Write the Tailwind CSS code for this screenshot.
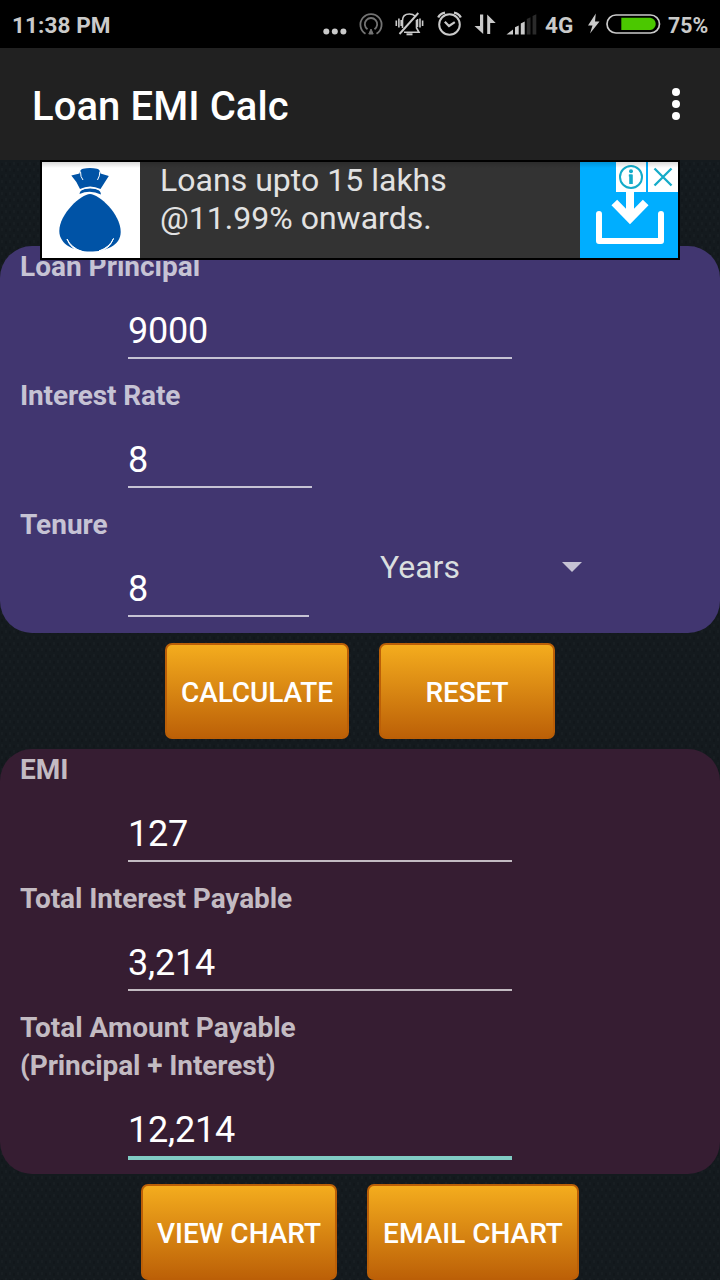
<!DOCTYPE html>
<html lang="en">
<head>
<meta charset="utf-8">
<title>Loan EMI Calc</title>
<script src="https://cdn.jsdelivr.net/npm/@tailwindcss/browser@4"></script>
</head>
<body class="font-['Roboto',sans-serif] bg-[#141a1e]">
<div class="relative isolate flex flex-col w-[720px] h-[1280px] overflow-hidden">
  <!-- woven backdrop -->
  <svg class="absolute inset-0 -z-10" width="720" height="1280">
    <defs>
      <pattern id="weave" width="8" height="12" patternUnits="userSpaceOnUse">
        <rect width="8" height="12" fill="#141a1e"/>
        <path d="M1 0h2v3h-2zM5 6h2v3h-2z" fill="#181e22"/>
        <path d="M5 1h2v3h-2zM1 7h2v3h-2z" fill="#12171b"/>
      </pattern>
    </defs>
    <rect width="720" height="1280" fill="url(#weave)"/>
  </svg>

  <header class="h-12 shrink-0 bg-black flex items-center text-[#cacaca] font-bold text-[22.5px]">
    <span class="ml-3 mt-0.5 w-[300px] leading-none tracking-[0.1px]">11:38 PM</span>
    <svg width="233" height="48" viewBox="312 0 233 48" fill="none" stroke="#cacaca">
      <g fill="#cacaca" stroke="none"><circle cx="326.3" cy="31.5" r="3"/><circle cx="334.8" cy="31.5" r="3"/><circle cx="343.4" cy="31.5" r="3"/></g>
      <g stroke="#747474" stroke-width="1.8">
        <path d="M365.500 33.700A10.600 10.600 0 1 1 376.500 33.700"/>
        <path d="M367.500 29.300A6.200 6.200 0 1 1 374.500 29.300"/>
        <path d="M371 29l2.200 5h-4.400z" fill="#747474" stroke-width="1"/>
      </g>
      <g stroke-width="1.6">
        <path d="M402.500 28V20.500C402.500 16 405 14 409.500 14Q413 14 415 16M416.500 20V28L419 32.300H404"/>
        <path d="M399.500 34L418.300 13" stroke-width="1.9"/>
        <path d="M406.500 34.300h6" stroke-width="2"/>
        <path d="M396.300 20.500v5.500M398.900 18.500v9M401.200 20v6M417.500 19v8M420 18.500v9M422.600 20.500v5.500"/>
      </g>
      <circle cx="449.500" cy="24.500" r="10.300" stroke-width="2"/>
      <path d="M444.800 21.800l4.200 4.200 5.800-3.800" stroke-width="2.200"/>
      <path d="M438.200 17.500Q440 13.600 445 12.600M460.800 17.500Q459 13.600 454 12.600" stroke-width="2.300"/>
      <g fill="#cacaca" stroke="none">
        <path d="M480 14.500h3.200v19.500l-8.700-8h5.500zM487.200 34V14.500l8.500 8.500h-5.500v11z"/>
        <path d="M506.500 34.500l6.500-5v5zM515 27.200l3.700-1.700v9H515zM520.800 23.600l3.900-2v12.900h-3.900z"/>
        <path d="M526.800 19l3.700-1.700v17.200h-3.700zM532.600 16l3.700-1.800v20.300h-3.700z" fill="#2a2a2a"/>
      </g>
    </svg>
    <span class="mt-0.5 w-[41px] leading-none">4G</span>
    <svg width="76" height="48" viewBox="586 0 76 48">
      <path d="M595.800 13.500L588 25.500h4.500L590 33.500L599.500 21.500h-4.500z" fill="#cacaca"/>
      <rect x="607" y="15" width="52.500" height="18" rx="9" fill="none" stroke="#cacaca" stroke-width="1.700"/>
      <path d="M621.300 17.800h29a6.200 6.200 0 0 1 0 12.300h-29z" fill="#4bc800"/>
    </svg>
    <span class="ml-1.5 mt-[3px] leading-none text-[21.3px]">75%</span>
  </header>

  <div class="h-28 shrink-0 bg-[#212121] flex items-center justify-between pl-8 pr-10">
    <h1 class="text-white font-medium text-[40px] leading-none mt-1.5 tracking-[0.08px] whitespace-nowrap">Loan EMI Calc</h1>
    <div class="flex flex-col gap-1 text-white">
      <i class="size-2 rounded-full bg-white"></i><i class="size-2 rounded-full bg-white"></i><i class="size-2 rounded-full bg-white"></i>
    </div>
  </div>

  <!-- banner floats over the form -->
  <aside class="absolute z-10 left-10 top-40 w-[640px] h-[100px] border-2 border-black bg-[#333333] flex overflow-hidden">
    <svg class="bg-white shrink-0" width="98" height="96" viewBox="42 162 98 96" fill="#0053a6">
      <path d="M71.300 175.500L79.500 173.500Q80 169.500 83 168.700Q90 167.500 97 168.700Q100 169.500 100.500 173.500L108.800 176L100.500 189Q90 184 80 189Q76.500 181 71.300 175.500z"/>
      <path d="M80.500 171.500Q80.300 177 83 180M99.800 171.500Q100 176 97.500 180" stroke="#fff" stroke-width="1" fill="none"/>
      <path d="M79.500 194Q80 190 84 189Q90 187.700 96.500 189Q100.500 190 101 194.500Q90 189.500 79.500 194z"/>
      <path d="M79.500 190.500Q90 185 101 190.500" stroke="#fff" stroke-width="1.200" fill="none"/>
      <path d="M90 194C99 194 120.700 214 120.700 232C120.700 246 105 251.500 90 251.500C75 251.500 59.300 245 59.300 231C59.300 214 81 194 90 194z"/>
      <path d="M67 239Q71 247.500 82 251.500Q71 250 67 239zM113.500 238.500Q110 247 99 251Q109 250 113.500 238.500z" fill="#fff" stroke="#fff"/>
    </svg>
    <p class="flex-1 pl-5 -mt-px text-[#e2e2e2] text-[32px] leading-[38px] tracking-[0.02px] whitespace-nowrap">Loans upto 15 lakhs<br>@11.99% onwards.</p>
    <svg class="shrink-0" width="98" height="96" viewBox="580 162 98 96" fill="none">
      <rect x="580" y="162" width="98" height="96" fill="#00aeff"/>
      <path d="M630 190v26" stroke="#fff" stroke-width="8"/>
      <path d="M614.300 202.500l15.700 16 15.700-16" stroke="#fff" stroke-width="8"/>
      <path d="M599 214v27h62v-27" stroke="#fff" stroke-width="6" stroke-linecap="round" stroke-linejoin="round"/>
      <path d="M616 162h30v30h-30zM648 162h30v30h-30z" fill="#fff"/>
      <g stroke="#14abc9" stroke-width="2"><circle cx="631" cy="177" r="11"/><path d="M654.500 168.500l17 17M671.500 168.500l-17 17" stroke-width="2.300"/><path d="M628.800 175.500h3"/><path d="M631 174.500v9.500" stroke-width="3.600"/></g>
      <circle cx="631" cy="171.300" r="2" fill="#14abc9"/>
    </svg>
    <div class="absolute inset-x-0 top-0 h-1.5 bg-linear-to-b from-black/15 to-transparent"></div>
  </aside>

  <main class="pt-[86px] flex flex-col text-[28px] leading-[38px]">
    <section class="bg-[#413670] rounded-[32px] h-[387px] text-[#c6c3d4]">
      <div class="h-[129px] pl-5">
        <div class="font-bold pt-0.5">Loan Principal</div>
        <div class="ml-[108px] mt-[23px] w-96 h-[50px] border-b-2 border-[#c6c3d4] text-white text-[36px] leading-[44px] tracking-[-0.2px]">9000</div>
      </div>
      <div class="h-[129px] pl-5">
        <div class="font-bold pt-0.5 tracking-[-0.13px]">Interest Rate</div>
        <div class="ml-[108px] mt-[23px] w-[184px] h-[50px] border-b-2 border-[#c6c3d4] text-white text-[36px] leading-[44px]">8</div>
      </div>
      <div class="h-[129px] pl-5">
        <div class="font-bold pt-0.5">Tenure</div>
        <div class="flex">
          <div class="ml-[108px] mt-[23px] w-[181px] h-[50px] border-b-2 border-[#c6c3d4] text-white text-[36px] leading-[44px]">8</div>
          <div class="ml-[71px] mt-[3px] h-10 w-[202px] flex items-center justify-between text-[32px] text-[#d9dedf]">
            <span>Years</span>
            <svg width="20" height="10" viewBox="0 0 20 10"><path d="M0 0h20L10 10z" fill="#c6c3d4"/></svg>
          </div>
        </div>
      </div>
    </section>

    <div class="h-[116px] flex justify-center items-center gap-[30px] text-white font-medium">
      <button class="w-[184px] h-24 rounded-[7px] border-2 border-[#bb5f07] bg-linear-to-b from-[#f5ae1e] to-[#bb5f07] bg-origin-border pt-1 tracking-[-0.1px]">CALCULATE</button>
      <button class="w-44 h-24 rounded-[7px] border-2 border-[#bb5f07] bg-linear-to-b from-[#f5ae1e] to-[#bb5f07] bg-origin-border pt-1 tracking-[-0.1px]">RESET</button>
    </div>

    <section class="bg-[#361d32] rounded-[32px] h-[425px] text-[#c3bbc2]">
      <div class="h-[129px] pl-5">
        <div class="font-bold pt-0.5">EMI</div>
        <div class="ml-[108px] mt-[23px] w-96 h-[50px] border-b-2 border-[#c3bbc2] text-white text-[36px] leading-[44px] tracking-[-0.2px]">127</div>
      </div>
      <div class="h-[129px] pl-5">
        <div class="font-bold pt-0.5 tracking-[-0.08px]">Total Interest Payable</div>
        <div class="ml-[108px] mt-[23px] w-96 h-[50px] border-b-2 border-[#c3bbc2] text-white text-[36px] leading-[44px] tracking-[-0.2px]">3,214</div>
      </div>
      <div class="h-[167px] pl-5">
        <div class="font-bold pt-0.5">Total Amount Payable<br><span class="tracking-[-0.1px]">(Principal + Interest)</span></div>
        <div class="ml-[108px] mt-[23px] w-96 h-[52px] border-b-4 border-[#80cbc4] text-white text-[36px] leading-[44px] tracking-[-0.2px]">12,214</div>
      </div>
    </section>

    <div class="h-[106px] pt-2.5 flex justify-center gap-[30px] text-white font-medium">
      <button class="w-[196px] h-24 rounded-[7px] border-2 border-[#bb5f07] bg-linear-to-b from-[#f5ae1e] to-[#bb5f07] bg-origin-border pt-1 whitespace-nowrap">VIEW CHART</button>
      <button class="w-[212px] h-24 rounded-[7px] border-2 border-[#bb5f07] bg-linear-to-b from-[#f5ae1e] to-[#bb5f07] bg-origin-border pt-1 whitespace-nowrap">EMAIL CHART</button>
    </div>
  </main>
</div>
</body>
</html>
